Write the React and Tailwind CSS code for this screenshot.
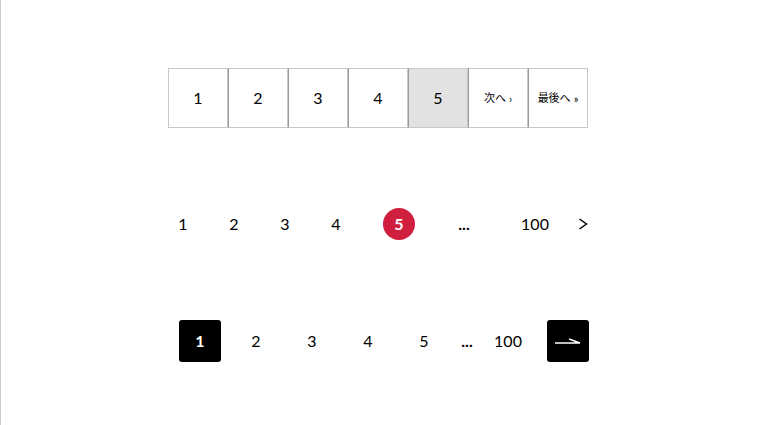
const font = { fontFamily: '"Lato", "Noto Sans CJK JP", sans-serif' };

function BoxPager() {
  const pages = [1, 2, 3, 4, 5];
  const current = 5;
  return (
    <div className="flex h-[60px]">
      {pages.map((p, i) => (
        <div
          key={p}
          className={`w-[60px] h-[60px] flex items-center justify-center border border-[#c8c8c8] text-[16px] text-black ${
            i === 0 ? "" : "border-l-[#9a9a9a]"
          } ${p === current ? "bg-[#e2e2e2]" : "bg-white"}`}
        >
          {p}
        </div>
      ))}
      <div className="w-[60px] h-[60px] flex items-center justify-center border border-[#c8c8c8] border-l-[#9a9a9a] text-[11px] text-black">
        次へ<span className="ml-[3px] text-[11px] leading-none">›</span>
      </div>
      <div className="w-[60px] h-[60px] flex items-center justify-center border border-[#c8c8c8] border-l-[#9a9a9a] text-[11px] text-black">
        最後へ<span className="ml-[3px] text-[11px] leading-none">»</span>
      </div>
    </div>
  );
}

function CirclePager() {
  return (
    <div className="flex items-center h-[32px] text-[16px] text-black">
      <span className="w-[30px] text-center">1</span>
      <span className="w-[30px] ml-[21px] text-center">2</span>
      <span className="w-[30px] ml-[21px] text-center">3</span>
      <span className="w-[30px] ml-[21px] text-center">4</span>
      <span className="w-[32px] h-[32px] ml-[32px] rounded-full bg-[#d01f3e] text-white font-bold flex items-center justify-center">
        5
      </span>
      <span className="w-[30px] ml-[34px] text-center font-bold">...</span>
      <span className="w-[30px] ml-[41px] text-center">100</span>
      <span className="w-[10px] ml-[28px] flex items-center">
        <svg width="10" height="14" viewBox="0 0 10 14" fill="none">
          <path d="M1.5 2 L8.5 7 L1.5 12" stroke="black" strokeWidth="1.5" />
        </svg>
      </span>
    </div>
  );
}

function SquarePager() {
  return (
    <div className="flex items-center h-[42px] text-[16px] text-black">
      <span className="ml-[11px] w-[42px] h-[42px] rounded-[3px] bg-black text-white font-bold flex items-center justify-center">
        1
      </span>
      <span className="w-[42px] ml-[14px] text-center">2</span>
      <span className="w-[42px] ml-[14px] text-center">3</span>
      <span className="w-[42px] ml-[14px] text-center">4</span>
      <span className="w-[42px] ml-[14px] text-center">5</span>
      <span className="w-[24px] ml-[10px] text-center font-bold">...</span>
      <span className="w-[30px] ml-[14px] text-center">100</span>
      <span className="ml-[24px] w-[42px] h-[42px] rounded-[3px] bg-black flex items-center justify-center">
        <svg width="28" height="10" viewBox="0 0 28 10" fill="none">
          <path d="M1 7 H26 L15 3" stroke="white" strokeWidth="1.5" />
        </svg>
      </span>
    </div>
  );
}

export default function App() {
  return (
    <div className="h-[425px] bg-white border-l border-[#cccccc]" style={font}>
      <div className="pl-[167px] pt-[68px] flex flex-col">
        <BoxPager />
        <div className="mt-[80px]">
          <CirclePager />
        </div>
        <div className="mt-[80px]">
          <SquarePager />
        </div>
      </div>
    </div>
  );
}
